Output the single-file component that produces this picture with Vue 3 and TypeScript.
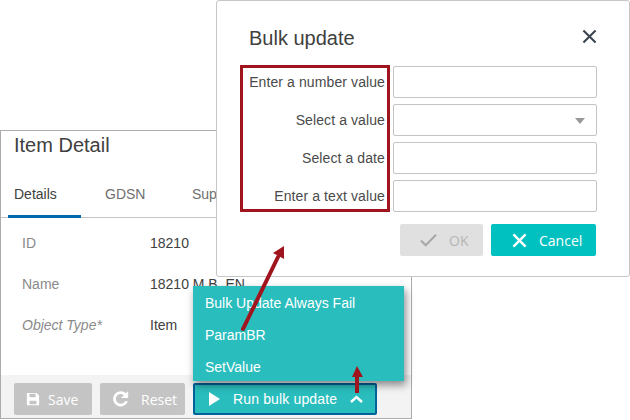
<script setup lang="ts">
const rows = [
  { label: 'ID', value: '18210' },
  { label: 'Name', value: '18210 M.B. EN' },
  { label: 'Object Type*', value: 'Item', italic: true }
]
const tabs = ['Details', 'GDSN', 'Suppliers']
const menuItems = ['Bulk Update Always Fail', 'ParamBR', 'SetValue']
const fields = [
  { label: 'Enter a number value' },
  { label: 'Select a value', select: true },
  { label: 'Select a date' },
  { label: 'Enter a text value' }
]
</script>

<template>
  <div class="canvas">
    <section class="item-window">
      <h2 class="item-title">Item Detail</h2>
      <nav class="tabs">
        <span v-for="(tab, i) in tabs" :key="tab" class="tab" :class="{ 'tab--active': i === 0 }">{{ tab }}</span>
      </nav>
      <div class="rows">
        <div v-for="row in rows" :key="row.label" class="row">
          <span class="row-label" :class="{ 'row-label--italic': row.italic }">{{ row.label }}</span>
          <span class="row-value">{{ row.value }}</span>
        </div>
      </div>
      <footer class="toolbar">
        <button class="btn btn--grey btn--save">
          <svg width="14" height="14" viewBox="0 0 16 16"><path fill="#fff" d="M1 1h11l3 3v11H1zM4 2v4h7V2zM4 10v4h8v-4z" fill-rule="evenodd" /></svg>
          Save
        </button>
        <button class="btn btn--grey btn--reset">
          <svg width="18" height="18" viewBox="0 0 20 20"><path fill="none" stroke="#fff" stroke-width="3" d="M16.2 12.5A7 7 0 1 1 14.800 5" /><path fill="#fff" d="M18 1v8h-8z" /></svg>
          Reset
        </button>
        <button class="btn btn--run">
          <svg width="11" height="14" viewBox="0 0 11 14"><path fill="#fff" d="M0 0l11 7-11 7z" /></svg>
          <span class="run-label">Run bulk update</span>
          <svg width="13" height="8" viewBox="0 0 13 8"><path fill="none" stroke="#fff" stroke-width="2.400" d="M1 7l5.500-5 5.500 5" /></svg>
        </button>
      </footer>
      <ul class="menu">
        <li v-for="item in menuItems" :key="item" class="menu-item">{{ item }}</li>
      </ul>
    </section>

    <section class="dialog">
      <header class="dialog-head">
        <h2 class="dialog-title">Bulk update</h2>
        <svg class="close" width="15" height="15" viewBox="0 0 16 16"><path fill="none" stroke="#3a4450" stroke-width="2.200" d="M1.500 1.500l13 13M14.500 1.500l-13 13" /></svg>
      </header>
      <form class="form">
        <div v-for="field in fields" :key="field.label" class="field">
          <label class="field-label">{{ field.label }}</label>
          <div class="input">
            <span v-if="field.select" class="caret"></span>
          </div>
        </div>
      </form>
      <div class="dialog-actions">
        <button class="btn btn--ok">
          <svg width="17" height="14" viewBox="0 0 18 14"><path fill="none" stroke="#a8a8a8" stroke-width="2.200" d="M1 7.500l5 5L17 1.500" /></svg>
          OK
        </button>
        <button class="btn btn--cancel">
          <svg width="15" height="15" viewBox="0 0 16 16"><path fill="none" stroke="#fff" stroke-width="2.600" d="M1.500 1.500l13 13M14.500 1.500l-13 13" /></svg>
          Cancel
        </button>
      </div>
    </section>

    <div class="callout"></div>
    <svg class="arrows" width="630" height="420" viewBox="0 0 630 420">
      <path fill="none" stroke="#a0141e" stroke-width="4" stroke-linecap="round" d="M243 329L278 257" />
      <path fill="#a0141e" d="M284 246l0 13-11-6z" />
      <path fill="none" stroke="#a0141e" stroke-width="4" d="M357 393V374" />
      <path fill="#a0141e" d="M357 366l6 11h-11z" />
    </svg>
  </div>
</template>

<style scoped>
.canvas {
  position: relative;
  width: 630px;
  height: 420px;
  overflow: hidden;
  background: #fff;
  font-family: "Liberation Sans", Arial, sans-serif;
}

/* Item window */
.item-window {
  position: absolute;
  left: 0;
  top: 130px;
  width: 412px;
  height: 289px;
  box-sizing: border-box;
  display: flex;
  flex-direction: column;
  border: 1px solid #acacac;
  color: #3d3d3d;
}

.item-title {
  margin: 2px 0 0 13px;
  font-size: 20px;
  font-weight: 400;
  line-height: 24px;
  color: #404040;
}

.tabs {
  display: flex;
  margin-top: 25px;
  height: 35px;
  padding-left: 7px;
  border-bottom: 1px solid #c4c4c4;
}

.tab {
  box-sizing: border-box;
  height: 36px;
  padding: 4px 0 0 6px;
  width: 87px;
  font-size: 14px;
  line-height: 17px;
  color: #6f6f6f;
}

.tab:first-child {
  width: 73px;
  margin-right: 18px;
}

.tab--active {
  color: #404040;
  border-bottom: 3px solid #0069ab;
}

.rows {
  flex: 1;
  padding: 17px 0 0 21px;
}

.row {
  display: flex;
  height: 41px;
  font-size: 14px;
  line-height: 17px;
}

.row-label {
  width: 128px;
  color: #8a8a8a;
}

.row-label--italic {
  font-style: italic;
}

.row-value {
  color: #404040;
}

.toolbar {
  display: flex;
  gap: 8px;
  height: 43px;
  box-sizing: border-box;
  padding: 8px 0 0 13px;
  background: #f3f3f3;
}

.btn {
  display: flex;
  align-items: center;
  box-sizing: border-box;
  height: 32px;
  padding: 0;
  border: 0;
  border-radius: 2px;
  font-family: "Open Sans", sans-serif;
  font-size: 14px;
  color: #fff;
}

.btn--grey {
  background: #c4c4c4;
}

.btn--save {
  width: 78px;
  padding-left: 12px;
  gap: 8px;
}

.btn--reset {
  width: 85px;
  padding-left: 12px;
  gap: 11px;
}

.btn--run {
  width: 184px;
  padding-left: 14px;
  border: 2px solid #00629b;
  background: #2abdbd;
  font-family: "Liberation Sans", Arial, sans-serif;
  letter-spacing: 0.15px;
}

.run-label {
  margin: 0 13px 0 13px;
}

.menu {
  position: absolute;
  left: 192px;
  top: 155px;
  width: 211px;
  height: 95px;
  box-sizing: border-box;
  margin: 0;
  padding: 1px 0 0;
  list-style: none;
  background: #2abdbd;
  box-shadow: 2px 4px 8px rgba(0, 0, 0, 0.45);
}

.menu-item {
  height: 32px;
  padding-left: 12px;
  font-size: 14px;
  line-height: 32px;
  color: #fff;
}

/* Bulk update dialog */
.dialog {
  position: absolute;
  left: 216px;
  top: 0;
  width: 414px;
  height: 277px;
  box-sizing: border-box;
  padding: 0 32px 0 24px;
  background: #fff;
  border: 1px solid #c6c6c6;
  border-radius: 3px;
}

.dialog-head {
  display: flex;
  align-items: center;
  justify-content: space-between;
  height: 65px;
  padding: 0 0 0 8px;
}

.dialog-title {
  margin: 10px 0 0;
  font-size: 20px;
  font-weight: 400;
  color: #404040;
}

.close {
  margin: 6px 0 0 0;
}

.form {
  display: flex;
  flex-direction: column;
  gap: 6px;
}

.field {
  display: flex;
  align-items: center;
  gap: 8px;
}

.field-label {
  width: 144px;
  text-align: right;
  font-size: 14px;
  letter-spacing: 0.1px;
  color: #4a4a4a;
}

.input {
  position: relative;
  flex: 1;
  height: 32px;
  box-sizing: border-box;
  border: 1px solid #c4c4c4;
  border-radius: 2px;
  background: #fff;
}

.caret {
  position: absolute;
  right: 11px;
  top: 13px;
  border-left: 5px solid transparent;
  border-right: 5px solid transparent;
  border-top: 6px solid #999;
}

.dialog-actions {
  display: flex;
  justify-content: flex-end;
  gap: 8px;
  margin-top: 12px;
  padding-right: 1px;
}

.btn--ok {
  width: 83px;
  padding-left: 20px;
  gap: 12px;
  background: #e0e0e0;
  color: #b5b5b5;
}

.btn--cancel {
  width: 105px;
  padding-left: 21px;
  gap: 12px;
  background: #00c0c0;
}

/* Annotations */
.callout {
  position: absolute;
  left: 240px;
  top: 65px;
  width: 150px;
  height: 147px;
  box-sizing: border-box;
  border: 3px solid #a0141e;
  pointer-events: none;
}

.arrows {
  position: absolute;
  left: 0;
  top: 0;
  pointer-events: none;
}
</style>
